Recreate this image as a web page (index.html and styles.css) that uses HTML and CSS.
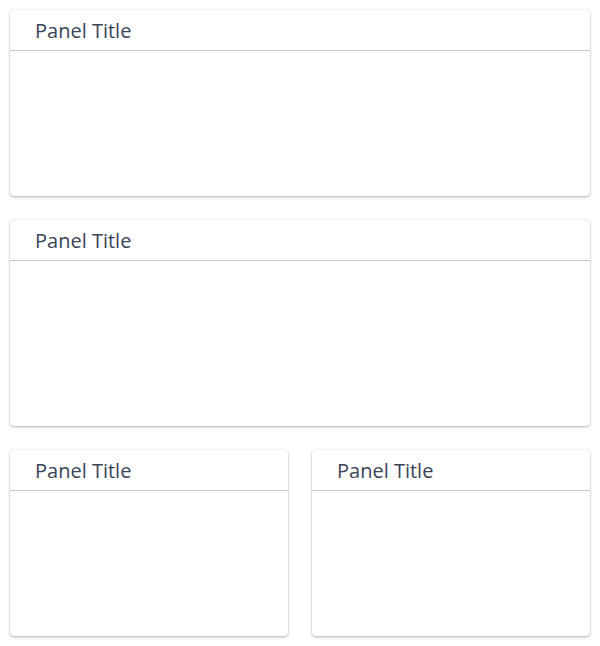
FILE: index.html
```html
<!DOCTYPE html>
<html>
<head>
<meta charset="utf-8">
<link rel="stylesheet" href="styles.css">
</head>
<body>
<div class="page">
  <section class="panel panel-a">
    <div class="panel-head">Panel Title</div>
    <div class="panel-body"></div>
  </section>
  <section class="panel panel-b">
    <div class="panel-head">Panel Title</div>
    <div class="panel-body"></div>
  </section>
  <div class="row">
    <section class="panel panel-c">
      <div class="panel-head">Panel Title</div>
      <div class="panel-body"></div>
    </section>
    <section class="panel panel-c">
      <div class="panel-head">Panel Title</div>
      <div class="panel-body"></div>
    </section>
  </div>
</div>
</body>
</html>
```
FILE: styles.css
```css
html, body {
  margin: 0;
  padding: 0;
  background: #ffffff;
}
body {
  font-family: "Open Sans", "Liberation Sans", sans-serif;
  color: #3a4557;
}
.page {
  padding: 10px;
  display: flex;
  flex-direction: column;
  gap: 24px;
}
.panel {
  background: #fff;
  border-radius: 4px;
  box-shadow: 0 1px 3px rgba(0, 0, 0, 0.3), 0 0 1px rgba(0, 0, 0, 0.12);
  display: flex;
  flex-direction: column;
}
.panel-head {
  height: 41px;
  box-sizing: border-box;
  padding: 8px 25px 0;
  font-size: 20px;
  font-weight: 400;
  line-height: 26px;
  border-bottom: 1px solid #c3cbd4;
}
.panel-body {
  flex: 1;
}
.panel-a { height: 186px; }
.panel-b { height: 206px; }
.row {
  display: grid;
  grid-template-columns: 1fr 1fr;
  gap: 24px;
}
.panel-c { height: 186px; }
```
